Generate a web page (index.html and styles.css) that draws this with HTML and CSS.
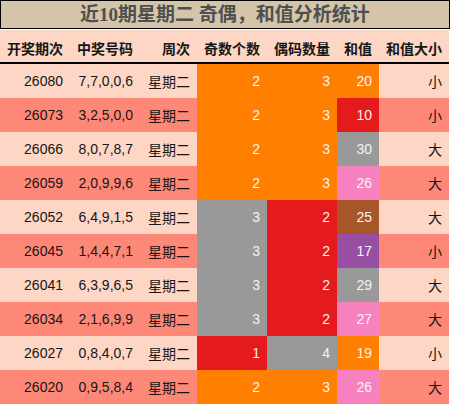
FILE: index.html
```html
<!DOCTYPE html>
<html lang="zh">
<head>
    <meta charset="UTF-8">
    <title>近10期星期二 奇偶，和值分析统计</title>
    <link rel="stylesheet" href="styles.css">
</head>
<body>
    <div class="title">近10期星期二 奇偶，和值分析统计</div>

    <table class="stats">
        <colgroup>
            <col style="width: 70px">
            <col style="width: 70px">
            <col style="width: 57px">
            <col style="width: 70px">
            <col style="width: 70px">
            <col style="width: 42px">
            <col style="width: 70px">
        </colgroup>
        <thead>
            <tr>
                <th>开奖期次</th>
                <th>中奖号码</th>
                <th>周次</th>
                <th>奇数个数</th>
                <th>偶码数量</th>
                <th>和值</th>
                <th>和值大小</th>
            </tr>
        </thead>
        <tbody>
            <tr class="light">
                <td>26080</td><td>7,7,0,0,6</td><td>星期二</td>
                <td class="num orange">2</td><td class="num orange">3</td><td class="num orange">20</td>
                <td>小</td>
            </tr>
            <tr class="dark">
                <td>26073</td><td>3,2,5,0,0</td><td>星期二</td>
                <td class="num orange">2</td><td class="num orange">3</td><td class="num red">10</td>
                <td>小</td>
            </tr>
            <tr class="light">
                <td>26066</td><td>8,0,7,8,7</td><td>星期二</td>
                <td class="num orange">2</td><td class="num orange">3</td><td class="num gray">30</td>
                <td>大</td>
            </tr>
            <tr class="dark">
                <td>26059</td><td>2,0,9,9,6</td><td>星期二</td>
                <td class="num orange">2</td><td class="num orange">3</td><td class="num pink">26</td>
                <td>大</td>
            </tr>
            <tr class="light">
                <td>26052</td><td>6,4,9,1,5</td><td>星期二</td>
                <td class="num gray">3</td><td class="num red">2</td><td class="num brown">25</td>
                <td>大</td>
            </tr>
            <tr class="dark">
                <td>26045</td><td>1,4,4,7,1</td><td>星期二</td>
                <td class="num gray">3</td><td class="num red">2</td><td class="num purple">17</td>
                <td>小</td>
            </tr>
            <tr class="light">
                <td>26041</td><td>6,3,9,6,5</td><td>星期二</td>
                <td class="num gray">3</td><td class="num red">2</td><td class="num gray">29</td>
                <td>大</td>
            </tr>
            <tr class="dark">
                <td>26034</td><td>2,1,6,9,9</td><td>星期二</td>
                <td class="num gray">3</td><td class="num red">2</td><td class="num pink">27</td>
                <td>大</td>
            </tr>
            <tr class="light">
                <td>26027</td><td>0,8,4,0,7</td><td>星期二</td>
                <td class="num red">1</td><td class="num gray">4</td><td class="num orange">19</td>
                <td>小</td>
            </tr>
            <tr class="dark">
                <td>26020</td><td>0,9,5,8,4</td><td>星期二</td>
                <td class="num orange">2</td><td class="num orange">3</td><td class="num pink">26</td>
                <td>大</td>
            </tr>
        </tbody>
    </table>
</body>
</html>
```

FILE: styles.css
```css
/* Page */
body {
    margin: 0;
    padding: 0;
    width: 450px;
    background-color: #fff;
    font-family: "Liberation Sans", "Noto Sans CJK SC", sans-serif;
}

.title {
    box-sizing: border-box;
    width: 450px;
    height: 29px;
    margin-bottom: 1px;
    border: 1px solid #000;
    background-color: #d4c5a9;
    color: #4f4f4f;
    font-family: "Liberation Serif", "Noto Sans CJK SC", serif;
    font-size: 19px;
    font-weight: bold;
    line-height: 27px;
    text-align: center;
}

/* Table */
.stats {
    width: 449px;
    table-layout: fixed;
    border-collapse: collapse;
    font-size: 14px;
    color: #161616;
}

.stats th,
.stats td {
    padding: 0 7px 0 0;
    text-align: right;
    white-space: nowrap;
    overflow: hidden;
}

.stats th {
    height: 33px;
    padding-top: 4px;
    box-sizing: border-box;
    background-color: #fdd6c5;
    border-bottom: 2px solid #000;
    font-weight: bold;
}

.stats td {
    height: 34px;
}

.light td {
    background-color: #fdd6c5;
}

.dark td {
    background-color: #fe8878;
}

/* Coloured value cells */
.stats td.num {
    color: #f4f4f4;
}

.stats td.orange { background-color: #ff7f00; }
.stats td.red { background-color: #e41a1c; }
.stats td.gray { background-color: #999999; }
.stats td.pink { background-color: #f781bf; }
.stats td.brown { background-color: #a65628; }
.stats td.purple { background-color: #984ea3; }
```
